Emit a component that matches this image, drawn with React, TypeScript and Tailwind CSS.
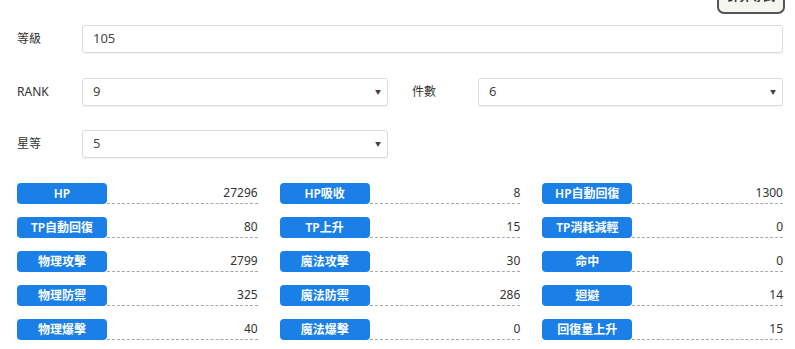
const stats = [
    ["HP", "27296"], ["HP吸收", "8"], ["HP自動回復", "1300"],
    ["TP自動回復", "80"], ["TP上升", "15"], ["TP消耗減輕", "0"],
    ["物理攻擊", "2799"], ["魔法攻擊", "30"], ["命中", "0"],
    ["物理防禦", "325"], ["魔法防禦", "286"], ["迴避", "14"],
    ["物理爆擊", "40"], ["魔法爆擊", "0"], ["回復量上升", "15"],
];

const font = {fontFamily: '"Noto Sans", "Noto Sans CJK TC", sans-serif'};

function Select({value}: {value: string}) {
    return (
        <div className="flex-1 h-[28px] flex items-center justify-between pl-[10px] pr-[6px] border border-[#dcdcdc] rounded-[3px] bg-white shadow-[0_1px_1px_rgba(0,0,0,0.06)] text-[13px] text-[#444]">
            <span>{value}</span>
            <span className="text-[6px] text-[#444]">▼</span>
        </div>
    );
}

export default function App() {
    return (
        <div className="relative w-[795px] h-[349px] overflow-hidden bg-white text-[#333]" style={font}>
            <div className="pl-[17px] pr-[12px]">
                <div className="flex justify-end h-[25px]">
                    <button className="-mt-[14px] h-[28px] w-[68px] -mr-[2px] border-2 border-[#555] rounded-[7px] bg-[#f6f6f1] text-[12px] font-bold text-[#333] leading-[16px] pt-[1px] flex items-start justify-center">
                        計算導試
                    </button>
                </div>

                <div className="flex items-center">
                    <div className="w-[65px] text-[12px]">等級</div>
                    <div className="flex-1 h-[28px] flex items-center pl-[10px] border border-[#dcdcdc] rounded-[3px] shadow-[0_1px_1px_rgba(0,0,0,0.06)] text-[13px] text-[#444]">
                        105
                    </div>
                </div>

                <div className="grid grid-cols-2 gap-x-[24px] mt-[25px]">
                    <div className="flex items-center">
                        <div className="w-[65px] text-[12px]">RANK</div>
                        <Select value="9"/>
                    </div>
                    <div className="flex items-center">
                        <div className="w-[66px] text-[12px]">件數</div>
                        <Select value="6"/>
                    </div>
                </div>

                <div className="grid grid-cols-2 gap-x-[24px] mt-[24px]">
                    <div className="flex items-center">
                        <div className="w-[65px] text-[12px]">星等</div>
                        <Select value="5"/>
                    </div>
                </div>

                <div className="grid grid-cols-3 gap-x-[22px] gap-y-[13px] mt-[25px]">
                    {stats.map(([name, value]) => (
                        <div key={name} className="flex items-end h-[21px]">
                            <div className="w-[90px] h-[21px] rounded-[4px] bg-[#1a7fe6] text-white text-[12px] font-semibold flex items-center justify-center">
                                {name}
                            </div>
                            <div className="flex-1 text-right text-[12px] leading-[18px] border-b border-dashed border-[#a8a8a8] pb-[1px]">
                                {value}
                            </div>
                        </div>
                    ))}
                </div>
            </div>
        </div>
    );
}
